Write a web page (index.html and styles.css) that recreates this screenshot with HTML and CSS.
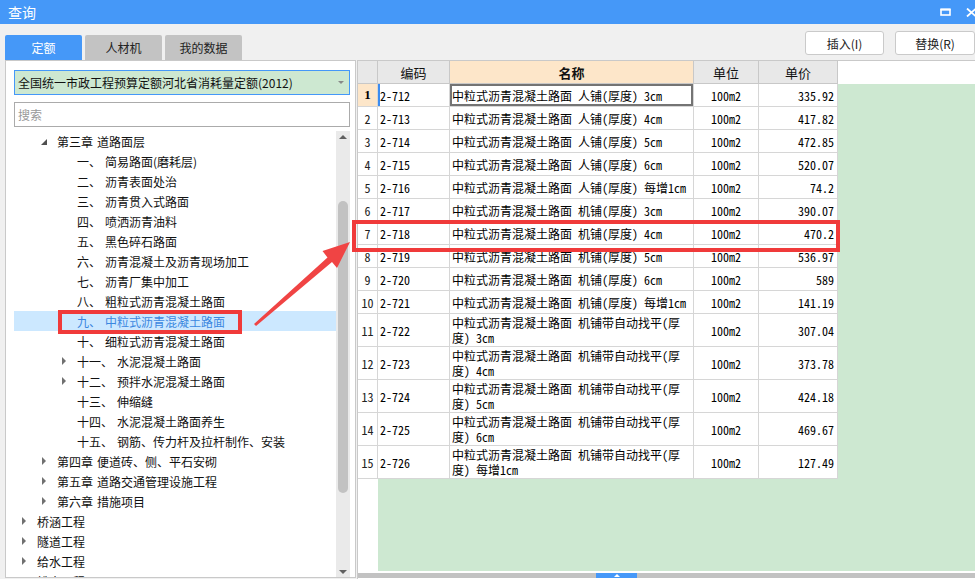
FILE: index.html
```html
<!DOCTYPE html>
<html lang="zh-CN">
<head>
<meta charset="utf-8">
<title>查询</title>
<link rel="stylesheet" href="styles.css">
</head>
<body>
<div class="titlebar">
  <span class="title">查询</span>
  <div class="win-btns">
    <svg class="ico-max" width="11" height="8" viewBox="0 0 11 8"><rect x="1" y="1.5" width="9" height="5.5" fill="none" stroke="#fff" stroke-width="1.6"/><rect x="0.5" y="0.5" width="10" height="2" fill="#fff"/></svg>
    <svg class="ico-close" width="12" height="9" viewBox="0 0 12 9"><path d="M1 0.5 L10 8.5 M10 0.5 L1 8.5" stroke="#fff" stroke-width="1.8"/></svg>
  </div>
</div>

<div class="toolbar">
  <div class="tabs">
    <div class="tab active">定额</div>
    <div class="tab">人材机</div>
    <div class="tab">我的数据</div>
  </div>
  <div class="actions">
    <button class="btn btn-insert">插入(I)</button>
    <button class="btn btn-replace">替换(R)</button>
  </div>
</div>

<div class="main">
  <div class="left-panel">
    <div class="select">全国统一市政工程预算定额河北省消耗量定额(2012)<span class="caret"></span></div>
    <div class="search">搜索</div>
    <div class="tree-wrap">
      <div class="tree">
        <div class="node l1"><span class="tog"><i class="tri-open"></i></span>第三章<span class="sp"></span>道路面层</div>
        <div class="node l2"><span class="tog"></span><span class="num">一、</span>简易路面(磨耗层)</div>
        <div class="node l2"><span class="tog"></span><span class="num">二、</span>沥青表面处治</div>
        <div class="node l2"><span class="tog"></span><span class="num">三、</span>沥青贯入式路面</div>
        <div class="node l2"><span class="tog"></span><span class="num">四、</span>喷洒沥青油料</div>
        <div class="node l2"><span class="tog"></span><span class="num">五、</span>黑色碎石路面</div>
        <div class="node l2"><span class="tog"></span><span class="num">六、</span>沥青混凝土及沥青现场加工</div>
        <div class="node l2"><span class="tog"></span><span class="num">七、</span>沥青厂集中加工</div>
        <div class="node l2"><span class="tog"></span><span class="num">八、</span>粗粒式沥青混凝土路面</div>
        <div class="node l2 selected"><span class="tog"></span><span class="num">九、</span>中粒式沥青混凝土路面</div>
        <div class="node l2"><span class="tog"></span><span class="num">十、</span>细粒式沥青混凝土路面</div>
        <div class="node l2"><span class="tog"><i class="tri"></i></span><span class="num">十一、</span>水泥混凝土路面</div>
        <div class="node l2"><span class="tog"><i class="tri"></i></span><span class="num">十二、</span>预拌水泥混凝土路面</div>
        <div class="node l2"><span class="tog"></span><span class="num">十三、</span>伸缩缝</div>
        <div class="node l2"><span class="tog"></span><span class="num">十四、</span>水泥混凝土路面养生</div>
        <div class="node l2"><span class="tog"></span><span class="num">十五、</span>钢筋、传力杆及拉杆制作、安装</div>
        <div class="node l1"><span class="tog"><i class="tri"></i></span>第四章<span class="sp"></span>便道砖、侧、平石安砌</div>
        <div class="node l1"><span class="tog"><i class="tri"></i></span>第五章<span class="sp"></span>道路交通管理设施工程</div>
        <div class="node l1"><span class="tog"><i class="tri"></i></span>第六章<span class="sp"></span>措施项目</div>
        <div class="node l0"><span class="tog"><i class="tri"></i></span>桥涵工程</div>
        <div class="node l0"><span class="tog"><i class="tri"></i></span>隧道工程</div>
        <div class="node l0"><span class="tog"><i class="tri"></i></span>给水工程</div>
        <div class="node l0"><span class="tog"><i class="tri"></i></span>排水工程</div>
      </div>
      <div class="vscroll">
        <div class="vs-btn vs-up"><i></i></div>
        <div class="vs-track"><div class="vs-thumb"></div></div>
        <div class="vs-btn vs-down"><i></i></div>
      </div>
    </div>
  </div>

  <div class="right-panel">
    <div class="grid">
      <div class="hc rn-h"></div>
      <div class="hc">编码</div>
      <div class="hc hc-name">名称</div>
      <div class="hc">单位</div>
      <div class="hc">单价</div>
      <div class="hc-empty"></div>

      <div class="rn rn-active">1</div><div class="c code code-active">2-712</div><div class="c name name-active"><span>中粒式沥青混凝土路面 人铺(厚度) 3cm</span></div><div class="c unit">100m2</div><div class="c price">335.92</div>
      <div class="rn">2</div><div class="c code">2-713</div><div class="c name"><span>中粒式沥青混凝土路面 人铺(厚度) 4cm</span></div><div class="c unit">100m2</div><div class="c price">417.82</div>
      <div class="rn">3</div><div class="c code">2-714</div><div class="c name"><span>中粒式沥青混凝土路面 人铺(厚度) 5cm</span></div><div class="c unit">100m2</div><div class="c price">472.85</div>
      <div class="rn">4</div><div class="c code">2-715</div><div class="c name"><span>中粒式沥青混凝土路面 人铺(厚度) 6cm</span></div><div class="c unit">100m2</div><div class="c price">520.07</div>
      <div class="rn">5</div><div class="c code">2-716</div><div class="c name"><span>中粒式沥青混凝土路面 人铺(厚度) 每增1cm</span></div><div class="c unit">100m2</div><div class="c price">74.2</div>
      <div class="rn">6</div><div class="c code">2-717</div><div class="c name"><span>中粒式沥青混凝土路面 机铺(厚度) 3cm</span></div><div class="c unit">100m2</div><div class="c price">390.07</div>
      <div class="rn">7</div><div class="c code">2-718</div><div class="c name"><span>中粒式沥青混凝土路面 机铺(厚度) 4cm</span></div><div class="c unit">100m2</div><div class="c price">470.2</div>
      <div class="rn">8</div><div class="c code">2-719</div><div class="c name"><span>中粒式沥青混凝土路面 机铺(厚度) 5cm</span></div><div class="c unit">100m2</div><div class="c price">536.97</div>
      <div class="rn">9</div><div class="c code">2-720</div><div class="c name"><span>中粒式沥青混凝土路面 机铺(厚度) 6cm</span></div><div class="c unit">100m2</div><div class="c price">589</div>
      <div class="rn">10</div><div class="c code">2-721</div><div class="c name"><span>中粒式沥青混凝土路面 机铺(厚度) 每增1cm</span></div><div class="c unit">100m2</div><div class="c price">141.19</div>
      <div class="rn">11</div><div class="c code">2-722</div><div class="c name"><span>中粒式沥青混凝土路面 机铺带自动找平(厚<br>度) 3cm</span></div><div class="c unit">100m2</div><div class="c price">307.04</div>
      <div class="rn">12</div><div class="c code">2-723</div><div class="c name"><span>中粒式沥青混凝土路面 机铺带自动找平(厚<br>度) 4cm</span></div><div class="c unit">100m2</div><div class="c price">373.78</div>
      <div class="rn">13</div><div class="c code">2-724</div><div class="c name"><span>中粒式沥青混凝土路面 机铺带自动找平(厚<br>度) 5cm</span></div><div class="c unit">100m2</div><div class="c price">424.18</div>
      <div class="rn">14</div><div class="c code">2-725</div><div class="c name"><span>中粒式沥青混凝土路面 机铺带自动找平(厚<br>度) 6cm</span></div><div class="c unit">100m2</div><div class="c price">469.67</div>
      <div class="rn">15</div><div class="c code">2-726</div><div class="c name"><span>中粒式沥青混凝土路面 机铺带自动找平(厚<br>度) 每增1cm</span></div><div class="c unit">100m2</div><div class="c price">127.49</div>
    </div>
    <div class="hscroll"><div class="hs-handle"><i></i></div></div>
  </div>
</div>

<div class="mark mark-tree"></div>
<div class="mark mark-row"></div>
<svg class="arrow" width="975" height="579" viewBox="0 0 975 579">
  <polygon points="254,324 327.5,257.5 322.5,251 350,242 337,268 332,262 256,326" fill="#F04444"/>
</svg>
</body>
</html>
```

FILE: styles.css
```css
* { box-sizing: border-box; }

body {
  margin: 0;
  width: 975px;
  height: 579px;
  overflow: hidden;
  position: relative;
  background: #F0F0F0;
  font-family: "Noto Sans CJK SC", "Microsoft YaHei", sans-serif;
  font-size: 12px;
  color: #000;
}

/* title bar */
.titlebar {
  height: 24px;
  background: #4598F8;
  color: #fff;
  display: flex;
  align-items: center;
  justify-content: space-between;
  padding-left: 8px;
  font-size: 14px;
}
.title { line-height: 24px; }
.win-btns {
  display: flex;
  align-items: center;
  gap: 15px;
  margin-right: -3px;
}

/* toolbar with tabs + buttons */
.toolbar {
  height: 36px;
  display: flex;
  justify-content: space-between;
  padding-left: 5px;
}
.tabs {
  display: flex;
  align-self: flex-end;
  gap: 3px;
}
.tab {
  width: 77px;
  height: 25px;
  line-height: 25px;
  text-align: center;
  background: #C3C3C3;
  color: #222;
  border-radius: 2px 2px 0 0;
}
.tab.active {
  background: #4598F8;
  color: #fff;
}
.actions {
  display: flex;
  gap: 11px;
  padding-top: 7px;
}
.btn {
  height: 24px;
  background: #fff;
  border: 1px solid #CACACA;
  border-radius: 3px;
  font-family: inherit;
  font-size: 12px;
  color: #222;
  padding: 0;
}
.btn-insert { width: 79px; }
.btn-replace { width: 80px; }

/* main area */
.main {
  display: flex;
  height: 519px;
}

.left-panel {
  width: 351px;
  height: 518px;
  margin-left: 5px;
  margin-right: 1px;
  background: #fff;
  border: 1px solid #C9C9C9;
  padding: 9px 5px 0 8px;
  display: flex;
  flex-direction: column;
}
.select {
  height: 25px;
  border: 1px solid #4598F8;
  background: #CDE8D1;
  display: flex;
  align-items: center;
  justify-content: space-between;
  padding: 0 4px 0 3px;
  color: #111;
}
.caret {
  width: 0;
  height: 0;
  border-left: 3px solid transparent;
  border-right: 3px solid transparent;
  border-top: 3px solid #888;
  margin-right: 1px;
}
.search {
  height: 25px;
  margin-top: 7px;
  border: 1px solid #ABABAB;
  color: #999;
  padding-left: 3px;
  line-height: 23px;
}
.tree-wrap {
  flex: 1;
  margin-top: 4px;
  display: flex;
  min-height: 0;
}
.tree {
  flex: 1;
  overflow: hidden;
}
.node {
  height: 20px;
  display: flex;
  align-items: center;
  white-space: nowrap;
  color: #111;
}
.node.l0 { padding-left: 7px; }
.node.l1 { padding-left: 27px; }
.node.l2 { padding-left: 47px; }
.node.selected {
  background: #CCE8FF;
  color: #3B87E0;
}
.tog {
  width: 16px;
  height: 20px;
  flex: none;
  display: flex;
  align-items: center;
}
.tri {
  width: 0;
  height: 0;
  border-top: 4px solid transparent;
  border-bottom: 4px solid transparent;
  border-left: 4px solid #707070;
  margin-left: 1px;
}
.tri-open {
  width: 0;
  height: 0;
  border-left: 6px solid transparent;
  border-bottom: 6px solid #505050;
  margin-top: 1px;
}
.num { margin-right: 4px; }
.sp { display: inline-block; width: 4px; }

.vscroll {
  width: 14px;
  background: #EAEAEA;
  display: flex;
  flex-direction: column;
}
.vs-btn {
  height: 14px;
  display: flex;
  justify-content: center;
}
.vs-up { align-items: flex-start; padding-top: 4px; }
.vs-down { align-items: flex-end; padding-bottom: 3px; }
.vs-up i {
  width: 0; height: 0;
  border-left: 4px solid transparent;
  border-right: 4px solid transparent;
  border-bottom: 4px solid #606060;
}
.vs-down i {
  width: 0; height: 0;
  border-left: 4px solid transparent;
  border-right: 4px solid transparent;
  border-top: 4px solid #606060;
}
.vs-track {
  flex: 1;
  padding: 56px 2px 0 2px;
}
.vs-thumb {
  height: 292px;
  background: #C2C2C2;
  border-radius: 5px;
}

/* right panel */
.right-panel {
  flex: 1;
  height: 519px;
  background: #fff;
  border-left: 1px solid #C9C9C9;
  border-top: 1px solid #C9C9C9;
  display: flex;
  flex-direction: column;
}
.grid {
  height: 510px;
  display: grid;
  grid-template-columns: 20px 72px 244px 65px 79px 1fr;
  grid-template-rows: 23px repeat(10, 23px) repeat(5, 33px) 1fr;
  background: linear-gradient(to right, #fff 0, #fff 20px, #CDE8D1 20px);
  font-family: "Noto Sans Mono CJK SC", "Liberation Mono", monospace;
}
.hc {
  background: #E8E8E8;
  border-right: 1px solid #C8C8C8;
  border-bottom: 1px solid #C8C8C8;
  display: flex;
  align-items: center;
  justify-content: center;
  font-family: "Noto Sans CJK SC", sans-serif;
  font-size: 13px;
  color: #111;
}
.hc-name {
  background: #FDE6C9;
  font-weight: bold;
}
.hc-empty { background: #fff; }

.rn {
  grid-column: 1;
  background: #fff;
  border-right: 1px solid #D6D6D6;
  border-bottom: 1px solid #D6D6D6;
  display: flex;
  align-items: center;
  justify-content: center;
  font-size: 12px;
  color: #222;
}
.rn-active {
  background: #FDE6C9;
  font-weight: bold;
  font-family: "Liberation Serif", serif;
  font-size: 13px;
  color: #000;
}
.c {
  background: #fff;
  border-right: 1px solid #D6D6D6;
  border-bottom: 1px solid #D6D6D6;
  display: flex;
  align-items: center;
  font-size: 12px;
  line-height: 15px;
  white-space: nowrap;
  color: #000;
}
.code { padding-left: 2px; }
.code-active { box-shadow: inset 2px 0 0 #3C8CF0; }
.name { padding-left: 2px; }
.name-active { box-shadow: inset 0 0 0 2px #747474; }
.unit { justify-content: center; }
.price { justify-content: flex-end; padding-right: 3px; }

.hscroll {
  height: 5px;
  margin-top: 2px;
  background: #C2C2C2;
  display: flex;
}
.hs-handle {
  width: 41px;
  margin-left: 238px;
  background: #4598F8;
  display: flex;
  justify-content: center;
  align-items: center;
}
.hs-handle i {
  width: 0; height: 0;
  border-left: 3px solid transparent;
  border-right: 3px solid transparent;
  border-bottom: 3px solid #fff;
}

/* annotations */
.mark {
  position: absolute;
  border: 4px solid #F03A3A;
}
.mark-tree {
  left: 58px;
  top: 310px;
  width: 184px;
  height: 24px;
}
.mark-row {
  left: 352px;
  top: 220px;
  width: 488px;
  height: 32px;
}
.arrow {
  position: absolute;
  left: 0;
  top: 0;
  pointer-events: none;
}
```
